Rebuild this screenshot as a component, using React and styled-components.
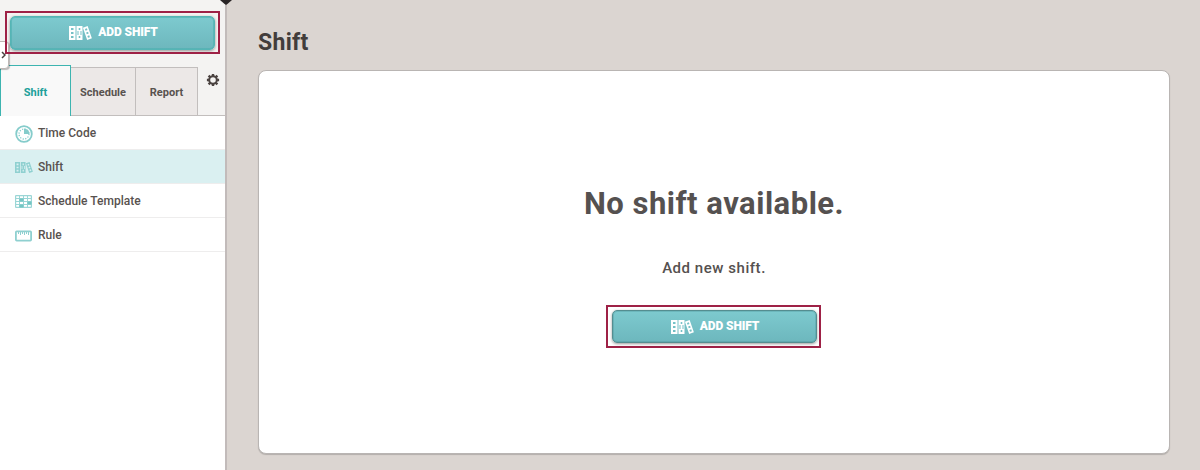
import React from "react";
import styled, { createGlobalStyle } from "styled-components";

const Global = createGlobalStyle`
  *, *::before, *::after { box-sizing: border-box; }
  body { margin: 0; font-family: Roboto, "Liberation Sans", sans-serif; color: #58524f; overflow: hidden; }
  button { font-family: inherit; margin: 0; }
`;

const Page = styled.div`
  position: relative;
  display: flex;
  width: 1200px;
  height: 470px;
  overflow: hidden;
  background: #dbd5d1;
`;

const Sidebar = styled.aside`
  width: 227px;
  flex: none;
  display: flex;
  flex-direction: column;
  background: #fff;
  border-right: 2px solid #c2bbba;
`;

const SidebarTop = styled.div`
  display: flex;
  height: 65px;
  padding: 11px 0 0 5px;
  background: #f4f3f2;
`;

const Highlight = styled.div`
  width: 215px;
  height: 43px;
  padding: 3px;
  border: 2px solid #9e2146;
`;

const CardAction = styled(Highlight)`
  margin-right: 2px;
  padding-left: 4px;
`;

const AddButton = styled.button`
  display: flex;
  align-items: center;
  justify-content: center;
  gap: 6px;
  width: 205px;
  height: ${(p) => (p.$dark ? 33 : 34)}px;
  padding: 0 0 ${(p) => (p.$dark ? 1 : 2)}px 2px;
  border: 1px solid ${(p) => (p.$dark ? "#548d90" : "#55b5b5")};
  border-radius: 5px;
  background: linear-gradient(#7dcacf, #6db7bd);
  box-shadow: inset 0 0 0 1px ${(p) => (p.$dark ? "rgba(70, 140, 145, 0.3)" : "rgba(75, 175, 175, 0.6)")}, 0 1px 3px rgba(0, 0, 0, 0.4);
  color: #fff;
  font-size: 12px;
  font-weight: 900;
  line-height: 14px;
  letter-spacing: -0.09px;
  white-space: nowrap;

  svg { position: relative; top: 1px; }
`;

const Tabs = styled.div`
  display: flex;
  align-items: flex-end;
  height: 51px;
  background: #f4f3f2;
`;

const Tab = styled.div`
  display: flex;
  align-items: center;
  justify-content: center;
  width: ${(p) => p.$w}px;
  height: ${(p) => (p.$active ? 51 : 49)}px;
  padding-top: 2px;
  border: 1px solid #c2bebd;
  border-left: 0;
  background: #ece8e7;
  color: #58524f;
  font-size: 11px;
  font-weight: 700;
  ${(p) => p.$active && `
    border: 1px solid #3db4b0;
    border-width: 1px 1px 0;
    background: #f9f9f9;
    color: #209f9a;
  `}
`;

const Settings = styled.div`
  flex: 1;
  height: 51px;
  padding: 8px 0 0 8px;
  border-bottom: 1px solid #c2bebd;
  line-height: 0;
`;

const MenuItem = styled.div`
  display: flex;
  align-items: center;
  gap: 5px;
  height: 34px;
  padding-left: 15px;
  border-bottom: 1px solid #eeeded;
  background: ${(p) => (p.$active ? "#daf0f1" : "#fff")};
  color: #58524f;
  font-size: 12px;
  font-weight: 500;
  letter-spacing: 0;

  svg { position: relative; top: 1px; }
`;

const Drawer = styled.div`
  position: absolute;
  left: -5px;
  top: 41px;
  width: 14px;
  height: 28px;
  display: flex;
  align-items: center;
  justify-content: flex-end;
  padding-right: 2px;
  border: 1px solid #bdb7b5;
  border-radius: 4px;
  background: #fff;
  box-shadow: 1px 1px 1px rgba(0, 0, 0, 0.25);
`;

const Frame = styled(Highlight)`
  position: absolute;
  left: 5px;
  top: 11px;
  background: none;
  pointer-events: none;
`;

const Notch = styled.svg`
  position: absolute;
  left: 220px;
  top: 0;
`;

const Main = styled.main`
  flex: 1;
  padding: 27px 31px 16px 31px;
  display: flex;
  flex-direction: column;
`;

const Title = styled.h1`
  margin: 0;
  height: 43px;
  color: #423d3b;
  font-size: 23px;
  line-height: 32px;
  font-weight: 700;
  letter-spacing: 0.3px;
`;

const Card = styled.section`
  width: 912px;
  height: 384px;
  display: flex;
  flex-direction: column;
  align-items: center;
  padding-top: 113px;
  border: 1px solid #b9b5b3;
  border-radius: 8px;
  background: #fff;
  box-shadow: 0 1px 1px rgba(0, 0, 0, 0.18);
`;

const Headline = styled.h2`
  margin: 0;
  color: #555150;
  font-size: 31px;
  line-height: 40px;
  font-weight: 700;
  letter-spacing: 0.5px;
`;

const Hint = styled.p`
  margin: 34px 0 27px;
  color: #555150;
  font-size: 15px;
  line-height: 20px;
  font-weight: 500;
  letter-spacing: 0.54px;
`;

const Binders = ({ width = 23, height = 16, small }) => (
  <svg width={width} height={height} viewBox="0 0 23 16" fill="currentColor" color={small ? "#8fd0d0" : "#fff"}>
    <path fillRule="evenodd" d="M0 1h6.5v14H0zM2 3v2h2.5V3zM2 7v2h2.5V7zM2 11v2h2.5v-2z" />
    <path fillRule="evenodd" d="M7.5 1h6v14h-6zM9.7 3v2h1.6V3zM8.5 6v4h1V6zM11.5 6v4h1V6zM9.7 11v2h1.6v-2z" />
    <g transform="rotate(-19 18.4 8)">
      <path fillRule="evenodd" d="M15.9 1.5h5v13h-5zM17.4 3.3v2h2v-2zM17.4 7v2h2V7zM17.4 10.8v2h2v-2z" />
    </g>
  </svg>
);

const Clock = () => (
  <svg width="18" height="18" viewBox="0 0 18 18" fill="none" stroke="#85cccb">
    <circle cx="9" cy="9" r="7.8" strokeWidth="1.8" />
    <circle cx="9" cy="9" r="5" strokeWidth="1.3" strokeDasharray="1.2 1.42" />
    <path d="M9 3.5V9h5.5A5.5 5.5 0 0 0 9 3.5z" fill="#85cccb" stroke="none" />
  </svg>
);

const Grid = () => (
  <svg width="17" height="13" viewBox="0 0 17 13" fill="none" stroke="#9bd6d6">
    <rect x=".6" y=".6" width="15.8" height="11.8" rx=".5" strokeWidth="1.2" />
    <path d="M0 3.5h17M0 6.5h17M0 9.5h17M4.5 0v13M8.5 0v13M12.5 0v13" />
    <path d="M4.5 3.5h4v3h-4zM4.5 9.5h4v3h-4zM12.5 6.5h4v3h-4z" fill="#74c5c3" stroke="none" />
  </svg>
);

const Ruler = () => (
  <svg width="17" height="12" viewBox="0 0 17 12" fill="none" stroke="#8fd0d0">
    <rect x=".9" y="1.4" width="15.2" height="9.2" rx=".8" strokeWidth="1.8" />
    <path d="M3.5 2v2M5.5 2v3M7.5 2v2M9.5 2v3M11.5 2v2M13.5 2v3" />
  </svg>
);

const Gear = () => (
  <svg width="14" height="14" viewBox="0 0 14 14" fill="none" stroke="#4a4240">
    <circle cx="7" cy="7" r="3.8" strokeWidth="2" />
    <path strokeWidth="2.4" d="M7 .9v2M7 11.1v2M.9 7h2M11.1 7h2M2.6 2.6 4 4M10 10l1.4 1.4M11.4 2.6 10 4M4 10l-1.4 1.4" />
  </svg>
);

const AddShift = ({ dark }) => (
  <AddButton $dark={dark}>
    <Binders />
    <span>ADD SHIFT</span>
  </AddButton>
);

const items = [
  { label: "Time Code", icon: <Clock /> },
  { label: "Shift", icon: <Binders small width={18} height={13} />, active: true },
  { label: "Schedule Template", icon: <Grid /> },
  { label: "Rule", icon: <Ruler /> },
];

const IconSlot = styled.span`
  display: flex;
  width: 18px;
`;

export default function App() {
  return (
    <>
      <Global />
      <Page>
        <Sidebar>
          <SidebarTop>
            <Highlight>
              <AddShift />
            </Highlight>
          </SidebarTop>
          <Tabs>
            <Tab $w={71} $active>Shift</Tab>
            <Tab $w={65}>Schedule</Tab>
            <Tab $w={62}>Report</Tab>
            <Settings><Gear /></Settings>
          </Tabs>
          {items.map((item) => (
            <MenuItem key={item.label} $active={item.active}>
              <IconSlot>{item.icon}</IconSlot>
              <span>{item.label}</span>
            </MenuItem>
          ))}
        </Sidebar>
        <Main>
          <Title>Shift</Title>
          <Card>
            <Headline>No shift available.</Headline>
            <Hint>Add new shift.</Hint>
            <CardAction>
              <AddShift dark />
            </CardAction>
          </Card>
        </Main>
        <Drawer>
          <svg width="5" height="8" viewBox="0 0 5 8" fill="none" stroke="#4a4240" strokeWidth="1.5">
            <path d="M1 1l3 3-3 3" />
          </svg>
        </Drawer>
        <Frame />
        <Notch width="12" height="5" viewBox="0 0 12 5">
          <path d="M0 0h12L8 3.5 6 5 4 3.5z" fill="#292526" />
        </Notch>
      </Page>
    </>
  );
}
